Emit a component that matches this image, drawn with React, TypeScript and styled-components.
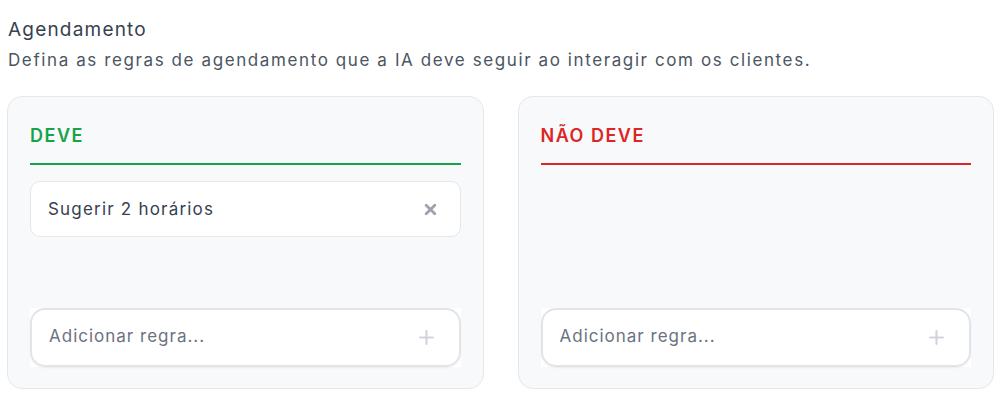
import { createGlobalStyle } from 'styled-components'
import styled from 'styled-components'

const GlobalStyle = createGlobalStyle`
    * {
        box-sizing: border-box;
    }
    body {
        margin: 0;
        background: #ffffff;
        font-family: Inter, 'Liberation Sans', sans-serif;
    }
`

const Section = styled.section`
    padding: 16px 14px 0 7px;
`

const Heading = styled.div`
    padding-left: 1px;
    margin-bottom: 24px;
    & > h2 {
        margin: 0;
        font-size: 19px;
        font-weight: 400;
        line-height: 28px;
        letter-spacing: 1.2px;
        color: #374151;
    }
    & > p {
        margin: 4px 0 0;
        font-size: 17px;
        line-height: 24px;
        color: #4b5563;
        letter-spacing: 1.6px;
    }
`

const Columns = styled.div`
    display: grid;
    grid-template-columns: 1fr 1fr;
    gap: 34px;
`

const Card = styled.div`
    display: flex;
    flex-direction: column;
    height: 293px;
    padding: 25px 22px 21px;
    background: #f8f9fb;
    border: 1px solid #e5e7eb;
    border-radius: 15px;
`

const CardTitle = styled.h3<{ $tone: string }>`
    margin: 0;
    padding-bottom: 13px;
    font-size: 18px;
    font-weight: 600;
    line-height: 28px;
    letter-spacing: 1.5px;
    color: ${(p) => p.$tone};
    border-bottom: 2px solid ${(p) => p.$tone};
`

const RuleList = styled.div`
    flex: 1;
    display: flex;
    flex-direction: column;
    gap: 10px;
    padding-top: 16px;
`

const Rule = styled.div`
    display: flex;
    align-items: center;
    justify-content: space-between;
    height: 56px;
    padding: 0 23px 0 17px;
    background: #ffffff;
    border: 1px solid #e5e7eb;
    border-radius: 10px;
    font-size: 17px;
    letter-spacing: 1.2px;
    color: #374151;
`

const IconButton = styled.button<{ $color: string }>`
    display: flex;
    align-items: center;
    justify-content: center;
    padding: 0;
    border: none;
    background: none;
    color: ${(p) => p.$color};
    cursor: pointer;
`

const InputWrap = styled.div`
    background: #ffffff;
`

const InputBox = styled.label`
    display: flex;
    align-items: center;
    height: 59px;
    padding: 0 25px 0 17px;
    border: 2px solid #e3e4e8;
    border-radius: 15px;
    box-shadow: 0 1px 2px rgba(0, 0, 0, 0.06);
    & > input {
        flex: 1;
        border: none;
        outline: none;
        background: transparent;
        font-family: inherit;
        font-size: 17px;
        letter-spacing: 1px;
        color: #374151;
        padding: 0 0 4px;
        &::placeholder {
            color: #6b7280;
        }
    }
`

const CloseIcon = () => (
    <svg width="13" height="13" viewBox="0 0 12 12" fill="none">
        <path d="M2 2 L10 10 M10 2 L2 10" stroke="currentColor" strokeWidth="2.6" strokeLinecap="round" />
    </svg>
)

const PlusIcon = () => (
    <svg width="15" height="15" viewBox="0 0 14 14" fill="none">
        <path d="M7 1 V13 M1 7 H13" stroke="currentColor" strokeWidth="2" strokeLinecap="round" />
    </svg>
)

type Column = { title: string; tone: string; rules: string[] }

const columns: Column[] = [
    { title: 'DEVE', tone: '#16a34a', rules: ['Sugerir 2 horários'] },
    { title: 'NÃO DEVE', tone: '#dc2626', rules: [] },
]

const App = () => {
    return (
        <>
            <GlobalStyle />
            <Section>
                <Heading>
                    <h2>Agendamento</h2>
                    <p>Defina as regras de agendamento que a IA deve seguir ao interagir com os clientes.</p>
                </Heading>
                <Columns>
                    {columns.map((col) => (
                        <Card key={col.title}>
                            <CardTitle $tone={col.tone}>{col.title}</CardTitle>
                            <RuleList>
                                {col.rules.map((rule) => (
                                    <Rule key={rule}>
                                        <span>{rule}</span>
                                        <IconButton $color="#9ca3af" aria-label="Remover">
                                            <CloseIcon />
                                        </IconButton>
                                    </Rule>
                                ))}
                            </RuleList>
                            <InputWrap>
                                <InputBox>
                                    <input placeholder="Adicionar regra..." />
                                    <IconButton $color="#d1d5db" aria-label="Adicionar">
                                        <PlusIcon />
                                    </IconButton>
                                </InputBox>
                            </InputWrap>
                        </Card>
                    ))}
                </Columns>
            </Section>
        </>
    )
}

export default App
